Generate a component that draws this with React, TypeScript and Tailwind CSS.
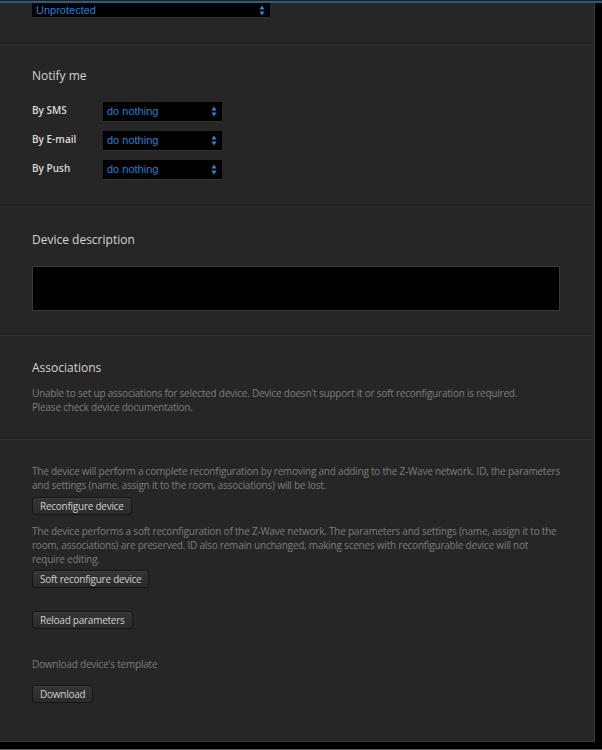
import React from "react";

function Arrows() {
  return (
    <svg width="6" height="11" viewBox="0 0 6 11" className="shrink-0">
      <path d="M3 0.5 L5.5 4.5 L0.5 4.5 Z" fill="#2f86d6" />
      <path d="M3 10.5 L5.5 6.5 L0.5 6.5 Z" fill="#2f86d6" />
    </svg>
  );
}

function Select({ value, className }: { value: string; className: string }) {
  return (
    <div className={`flex items-center justify-between bg-black pl-[4px] pr-[5px] border-b border-[#333] ${className}`}>
      <span className="text-[11px] leading-none text-[#2a7fd0] font-['Liberation_Sans',sans-serif]">{value}</span>
      <Arrows />
    </div>
  );
}

function Divider() {
  return (
    <div>
      <div className="h-px bg-[#1a1a1a]" />
      <div className="h-px bg-[#333333]" />
    </div>
  );
}

function Btn({ children }: { children: string }) {
  return (
    <button className="h-[18px] px-[7px] rounded-[3px] border border-[#151515] bg-gradient-to-b from-[#353535] to-[#2a2a2a] text-[10px] tracking-[-0.25px] text-[#cfcfcf] leading-none shadow-[inset_0_1px_0_#3c3c3c]">
      {children}
    </button>
  );
}

function Heading({ children }: { children: string }) {
  return <h2 className="text-[12px] text-[#d4d4d4] leading-[16px]">{children}</h2>;
}

export default function App() {
  return (
    <div className="relative w-[602px] h-[750px] bg-black overflow-hidden font-['Open_Sans',sans-serif]">
      <div className="h-px bg-[#1f1f1f]" />
      <div className="h-[2px] bg-[#1f5d8f]" />
      <div className="w-[595px] h-[739px] bg-[#262626] border-r border-b border-[#3a3a3a] flex flex-col">
        {/* protection */}
        <div className="pl-[32px] h-[40px]">
          <Select value="Unprotected" className="w-[238px] h-[15px]" />
        </div>
        <Divider />

        {/* notify */}
        <div className="pl-[32px] pt-[23px] h-[160px]">
          <Heading>Notify me</Heading>
          <div className="mt-[18px] flex flex-col gap-[9px]">
            {[
              ["By SMS", "do nothing"],
              ["By E-mail", "do nothing"],
              ["By Push", "do nothing"],
            ].map(([label, v]) => (
              <div key={label} className="flex items-start h-[20px]">
                <span className="w-[71px] text-[10px] font-semibold text-[#dcdcdc] leading-[16px]">{label}</span>
                <Select value={v} className="w-[119px] h-[20px]" />
              </div>
            ))}
          </div>
        </div>
        <Divider />

        {/* description */}
        <div className="pl-[32px] pr-[34px] pt-[25px] h-[127px]">
          <Heading>Device description</Heading>
          <div className="mt-[18px] h-[45px] bg-black border border-[#3a3a3a]" />
        </div>
        <Divider />

        {/* associations */}
        <div className="pl-[32px] pt-[24px] h-[102px]">
          <Heading>Associations</Heading>
          <p className="mt-[10px] text-[10px] leading-[14px] text-[#7d7d7d] tracking-[-0.22px]">
            Unable to set up associations for selected device. Device doesn't support it or soft reconfiguration is required.
            <br />
            Please check device documentation.
          </p>
        </div>
        <Divider />

        {/* reconfigure */}
        <div className="pl-[32px] pr-[30px] pt-[24px] flex flex-col items-start text-[10px] leading-[14px] text-[#7d7d7d] tracking-[-0.22px]">
          <p>
            The device will perform a complete reconfiguration by removing and adding to the Z-Wave network. ID, the parameters and settings (name, assign it to the room, associations) will be lost.
          </p>
          <div className="mt-[5px]">
            <Btn>Reconfigure device</Btn>
          </div>
          <p className="mt-[9px] max-w-[530px]">
            The device performs a soft reconfiguration of the Z-Wave network. The parameters and settings (name, assign it to the room, associations) are preserved. ID also remain unchanged, making scenes with reconfigurable device will not require editing.
          </p>
          <div className="mt-[4px]">
            <Btn>Soft reconfigure device</Btn>
          </div>
          <div className="mt-[23px]">
            <Btn>Reload parameters</Btn>
          </div>
          <p className="mt-[28px]">Download device's template</p>
          <div className="mt-[14px]">
            <Btn>Download</Btn>
          </div>
        </div>
      </div>
      <div className="absolute left-0 bottom-0 w-full h-px bg-[#5a5a5a]" />
    </div>
  );
}
